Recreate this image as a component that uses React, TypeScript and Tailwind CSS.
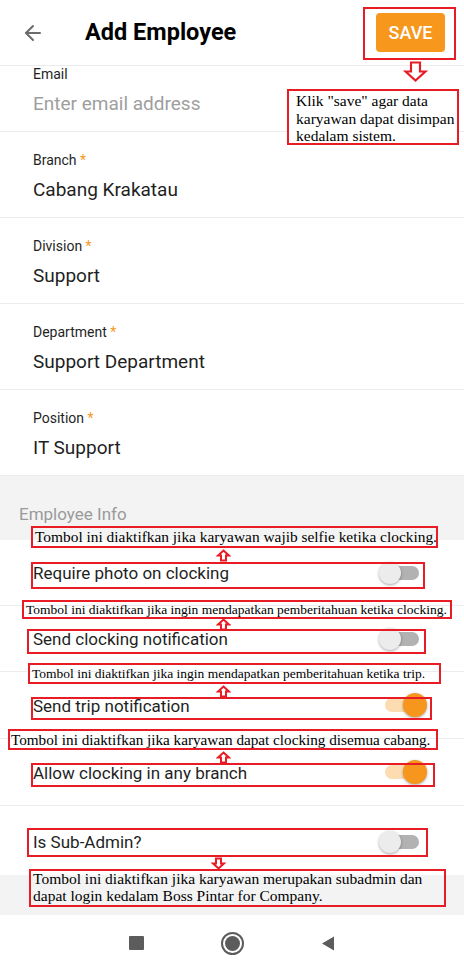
import React from "react";
import { ArrowLeft } from "lucide-react";

const fields = [
  { label: "Branch", value: "Cabang Krakatau" },
  { label: "Division", value: "Support" },
  { label: "Department", value: "Support Department" },
  { label: "Position", value: "IT Support" },
];

const toggles = [
  { label: "Require photo on clocking", on: false, h: "h-[66px]" },
  { label: "Send clocking notification", on: false, h: "h-[66px]" },
  { label: "Send trip notification", on: true, h: "h-[67px]" },
  { label: "Allow clocking in any branch", on: true, h: "h-[67px]" },
];

const Switch = ({ on }: { on: boolean }) => (
  <div className="relative w-[48px] h-[24px]">
    <div
      className={
        on
          ? "absolute left-[6px] top-[5px] w-[38px] h-[14px] rounded-full bg-[#fcdcb0]"
          : "absolute left-[4px] top-[5px] w-[36px] h-[14px] rounded-full bg-[#b2b2b2]"
      }
    />
    <div
      className={
        on
          ? "absolute left-[24px] top-0 w-[24px] h-[24px] rounded-full bg-[#f7961c] shadow-[0_1px_3px_rgba(0,0,0,0.35)]"
          : "absolute left-0 top-[1px] w-[22px] h-[22px] rounded-full bg-[#ececec] shadow-[0_1px_3px_rgba(0,0,0,0.35)]"
      }
    />
  </div>
);

const UpArrow = () => (
  <svg width="15" height="13" viewBox="0 0 15 13">
    <polygon points="7.5,1.5 13,6.5 10,6.5 10,11.5 5,11.5 5,6.5 2,6.5" fill="white" stroke="#e81c24" strokeWidth="2" />
  </svg>
);

const DownArrow = ({ w = 15, h = 13 }: { w?: number; h?: number }) => (
  <svg width={w} height={h} viewBox="0 0 15 13">
    <polygon points="5,1.5 10,1.5 10,6.5 13,6.5 7.5,11.5 2,6.5 5,6.5" fill="white" stroke="#e81c24" strokeWidth={w > 20 ? 1.2 : 2} />
  </svg>
);

// annotation box drawn over the screenshot
const Note = ({ className, wrap, children }: { className: string; wrap?: boolean; children?: React.ReactNode }) => (
  <div
    className={"absolute border-2 border-[#e81c24] text-black " + (wrap ? "whitespace-normal " : "whitespace-nowrap ") + className}
    style={{ fontFamily: '"Liberation Serif", serif' }}
  >
    {children}
  </div>
);

export default function App() {
  return (
    <div className="relative w-[464px] h-[971px] overflow-hidden bg-white text-[#1f1f1f]" style={{ fontFamily: "Roboto, sans-serif" }}>
      {/* header */}
      <div className="h-[66px] flex items-center border-b border-[#ececec]">
        <ArrowLeft className="ml-[21px] text-[#6b6b6b]" size={24} strokeWidth={2} />
        <div className="ml-[40px] text-[23.5px] font-bold text-black">Add Employee</div>
        <div className="ml-auto mr-[19px] w-[69px] h-[39px] rounded-[4px] bg-[#f7981d] flex items-center justify-center text-white text-[18px] font-medium">
          SAVE
        </div>
      </div>

      {/* email */}
      <div className="h-[66px] border-b border-[#ececec] pl-[33px]">
        <div className="text-[14px] leading-[16px]">Email</div>
        <div className="mt-[10px] text-[19px] leading-[24px] text-[#9e9e9e]">Enter email address</div>
      </div>

      {fields.map((f) => (
        <div key={f.label} className="h-[86px] border-b border-[#ececec] pl-[33px] pt-[20px]">
          <div className="text-[14px] leading-[16px]">
            {f.label} <span className="text-[#f7981d]">*</span>
          </div>
          <div className="mt-[10px] text-[19px] leading-[24px]">{f.value}</div>
        </div>
      ))}

      <div className="h-[64px] bg-[#f3f3f3] pl-[19px] pt-[28px] text-[17px] leading-[20px] text-[#9a9a9a]">Employee Info</div>

      {toggles.map((t) => (
        <div key={t.label} className={t.h + " border-b border-[#ececec] flex items-center justify-between pl-[33px] pr-[37px]"}>
          <div className="text-[17px] pt-[3px]">{t.label}</div>
          <Switch on={t.on} />
        </div>
      ))}

      <div className="h-[69px] flex items-center justify-between pl-[33px] pr-[37px] pt-[2px]">
        <div className="text-[17px] pt-[3px]">Is Sub-Admin?</div>
        <Switch on={false} />
      </div>
      <div className="h-[40px] bg-[#f3f3f3]" />

      {/* nav bar */}
      <div className="h-[56px] flex items-center justify-center gap-[77px]">
        <div className="w-[15px] h-[14px] bg-[#5c5c5c] rounded-[1px]" />
        <div className="w-[23px] h-[23px] rounded-full border-2 border-[#5c5c5c] flex items-center justify-center">
          <div className="w-[15px] h-[15px] rounded-full bg-[#5c5c5c]" />
        </div>
        <svg width="14" height="15" viewBox="0 0 14 15">
          <polygon points="13,0.5 13,14.5 1,7.5" fill="#5c5c5c" />
        </svg>
      </div>

      {/* annotations */}
      <Note className="left-[363px] top-[7px] w-[93px] h-[53px]" />
      <div className="absolute left-[402px] top-[59px]">
        <DownArrow w={27} h={25} />
      </div>
      <Note wrap className="left-[287px] top-[89px] w-[172px] h-[56px] bg-white pl-[7px] pt-[1px] text-[15.5px] leading-[17.5px]">
        Klik "save" agar data karyawan dapat disimpan kedalam sistem.
      </Note>

      <Note className="left-[31px] top-[526px] w-[407px] h-[22px] pl-[2px] text-[15.4px] leading-[18px]">
        Tombol ini diaktifkan jika karyawan wajib selfie ketika clocking.
      </Note>
      <div className="absolute left-[216px] top-[549px]"><UpArrow /></div>
      <Note className="left-[31px] top-[562px] w-[394px] h-[27px]" />

      <Note className="left-[22px] top-[600px] w-[430px] h-[19px] pl-[2px] text-[13.5px] leading-[15px]">
        Tombol ini diaktifkan jika ingin mendapatkan pemberitahuan ketika clocking.
      </Note>
      <div className="absolute left-[216px] top-[618px]"><UpArrow /></div>
      <Note className="left-[27px] top-[629px] w-[399px] h-[25px]" />

      <Note className="left-[28px] top-[663px] w-[413px] h-[21px] pl-[2px] text-[13.5px] leading-[17px]">
        Tombol ini diaktifkan jika ingin mendapatkan pemberitahuan ketika trip.
      </Note>
      <div className="absolute left-[216px] top-[685px]"><UpArrow /></div>
      <Note className="left-[31px] top-[697px] w-[401px] h-[23px]" />

      <Note className="left-[8px] top-[729px] w-[430px] h-[21px] pl-[1px] text-[15.2px] leading-[17px]">
        Tombol ini diaktifkan jika karyawan dapat clocking disemua cabang.
      </Note>
      <div className="absolute left-[216px] top-[751px]"><UpArrow /></div>
      <Note className="left-[31px] top-[763px] w-[404px] h-[24px]" />

      <Note className="left-[27px] top-[828px] w-[401px] h-[29px]" />
      <div className="absolute left-[211px] top-[857px]"><DownArrow /></div>
      <Note wrap className="left-[29px] top-[869px] w-[417px] h-[38px] pl-[2px] text-[15.5px] leading-[16.5px]">
        Tombol ini diaktifkan jika karyawan merupakan subadmin dan dapat login kedalam Boss Pintar for Company.
      </Note>
    </div>
  );
}
